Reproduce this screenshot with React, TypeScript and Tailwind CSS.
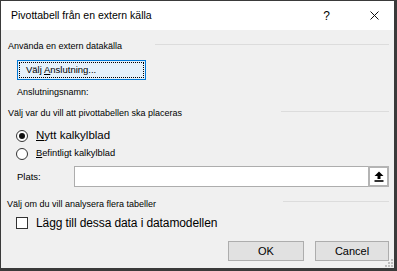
import React from "react";

const F = { fontFamily: '"Liberation Sans", Arial, sans-serif' };

export default function App() {
  return (
    <div
      className="w-[397px] h-[271px] border-l border-t border-r-[3px] border-b-[3px] border-[#3a3a3a] flex flex-col relative bg-[#f0f0f0] text-black overflow-hidden"
      style={F}
    >
      {/* Title bar */}
      <div className="h-[29px] bg-white flex items-center shrink-0">
        <span className="ml-[10px] text-[10.5px] leading-none">Pivottabell från en extern källa</span>
        <span className="ml-auto text-[12px] leading-none mr-[40px]">?</span>
        <svg width="9" height="9" viewBox="0 0 9 9" className="mr-[15px]">
          <path d="M0.5 0.5 L8.5 8.5 M8.5 0.5 L0.5 8.5" stroke="#111" strokeWidth="1" />
        </svg>
      </div>

      {/* Content */}
      <div className="flex-1 flex flex-col pl-[7px] pr-[5px] text-[9px] leading-none">
        {/* Section 1 */}
        <div className="mt-[8px] h-[16px] flex items-center">
          <span>Använda en extern datakälla</span>
          <div className="ml-auto self-start mt-[6px] w-[234px] h-px bg-[#dcdcdc]" />
        </div>
        <div className="mt-[6px] h-[20px] flex">
          <button className="ml-[9px] w-[129px] h-[20px] border border-[#0078d7] bg-[#e5f1fb] p-[1px] flex">
            <div className="flex-1 border border-dotted border-black flex items-center pl-[6px]">
              <span className="text-[9.5px]">
                Välj <span className="underline">A</span>nslutning...
              </span>
            </div>
          </button>
        </div>
        <div className="mt-[4px] h-[16px] flex items-center">
          <span className="ml-[9px]">Anslutningsnamn:</span>
        </div>

        {/* Section 2 */}
        <div className="mt-[5px] h-[16px] flex items-center">
          <span>Välj var du vill att pivottabellen ska placeras</span>
          <div className="ml-auto self-start mt-[6px] w-[108px] h-px bg-[#dcdcdc]" />
        </div>
        <div className="mt-[7px] h-[16px] flex items-center">
          <div className="ml-[8px] w-[12px] h-[12px] rounded-full border border-[#333] bg-white flex items-center justify-center">
            <div className="w-[6px] h-[6px] rounded-full bg-[#111]" />
          </div>
          <span className="ml-[8px] text-[11.5px]">
            <span className="underline">N</span>ytt kalkylblad
          </span>
        </div>
        <div className="mt-[2px] h-[16px] flex items-center">
          <div className="ml-[8px] w-[12px] h-[12px] rounded-full border border-[#333] bg-white" />
          <span className="ml-[8px] text-[9.3px]">
            <span className="underline">B</span>efintligt kalkylblad
          </span>
        </div>
        <div className="mt-[4px] h-[21px] flex items-center">
          <span className="ml-[9px] w-[57px] text-[9.5px]">Plats:</span>
          <div className="w-[315px] h-[21px] border border-[#adadad] bg-white flex justify-end">
            <div className="w-[21px] h-[21px] -mt-px -mr-px border-2 border-[#b4b4b4] bg-white flex items-center justify-center">
              <svg width="10" height="11" viewBox="0 0 10 11">
                <polygon points="5,0.5 9.5,5 6.5,5 6.5,8 3.5,8 3.5,5 0.5,5" fill="#000" />
                <rect x="0.5" y="9.2" width="9" height="1.6" fill="#000" />
              </svg>
            </div>
          </div>
        </div>

        {/* Section 3 */}
        <div className="mt-[9px] h-[16px] flex items-center">
          <span className="-ml-px">Välj om du vill analysera flera tabeller</span>
          <div className="ml-auto self-start mt-[5px] w-[106px] h-px bg-[#dcdcdc]" />
        </div>
        <div className="mt-[3px] h-[16px] flex items-center">
          <div className="ml-[8px] w-[12px] h-[12px] border border-[#333] bg-white" />
          <span className="ml-[8px] text-[12px] tracking-[-0.1px]">Lägg till dessa data i datamodellen</span>
        </div>
        <div className="mt-[10px] h-[20px] flex justify-end">
          <button className="w-[76px] h-[20px] border border-[#adadad] bg-[#e1e1e1] text-[11px] flex items-center justify-center">
            OK
          </button>
          <button className="ml-[11px] w-[74px] h-[20px] border border-[#adadad] bg-[#e1e1e1] text-[11px] flex items-center justify-center">
            Cancel
          </button>
        </div>
      </div>

      {/* Size grip */}
      <svg width="9" height="9" viewBox="0 0 9 9" className="absolute right-[0px] bottom-[0px]">
        <rect x="6" y="0" width="2" height="2" fill="#bdbdbd" />
        <rect x="3" y="3" width="2" height="2" fill="#bdbdbd" />
        <rect x="6" y="3" width="2" height="2" fill="#bdbdbd" />
        <rect x="0" y="6" width="2" height="2" fill="#bdbdbd" />
        <rect x="3" y="6" width="2" height="2" fill="#bdbdbd" />
        <rect x="6" y="6" width="2" height="2" fill="#bdbdbd" />
      </svg>
    </div>
  );
}
